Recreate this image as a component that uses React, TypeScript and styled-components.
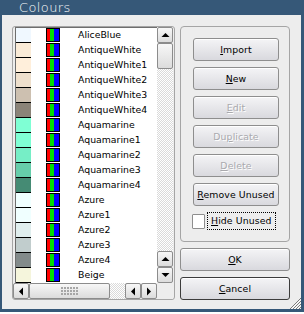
import styled, { createGlobalStyle } from "styled-components";

const GlobalStyle = createGlobalStyle`
  html, body {
    margin: 0;
    padding: 0;
    background: #ffffff;
  }
  body {
    font-family: "DejaVu Sans", "Liberation Sans", sans-serif;
  }
`;

const colours = [
  { name: "AliceBlue", hex: "#f0f8ff" },
  { name: "AntiqueWhite", hex: "#faebd7" },
  { name: "AntiqueWhite1", hex: "#ffefdb" },
  { name: "AntiqueWhite2", hex: "#eedfcc" },
  { name: "AntiqueWhite3", hex: "#cdc0b0" },
  { name: "AntiqueWhite4", hex: "#8b8378" },
  { name: "Aquamarine", hex: "#7fffd4" },
  { name: "Aquamarine1", hex: "#7fffd4" },
  { name: "Aquamarine2", hex: "#76eec6" },
  { name: "Aquamarine3", hex: "#66cdaa" },
  { name: "Aquamarine4", hex: "#458b74" },
  { name: "Azure", hex: "#f0ffff" },
  { name: "Azure1", hex: "#f0ffff" },
  { name: "Azure2", hex: "#e0eeee" },
  { name: "Azure3", hex: "#c1cdcd" },
  { name: "Azure4", hex: "#838b8b" },
  { name: "Beige", hex: "#f5f5dc" },
];

const Window = styled.div`
  width: 304px;
  height: 312px;
  box-sizing: border-box;
  background: #365878;
  padding: 0 3px 3px 2px;
  display: flex;
  flex-direction: column;
`;

const TitleBar = styled.div`
  height: 15px;
  padding-left: 17px;
  color: #ffffff;
  font-size: 13px;
  font-weight: 200;
  line-height: 15px;
  letter-spacing: 0.4px;
`;

const Body = styled.div`
  position: relative;
  flex: 1;
  background: #ededed;
  display: flex;
  gap: 5px;
  padding: 11px 11px 9px 10px;
`;

const Panel = styled.div`
  width: 163px;
  height: 274px;
  box-sizing: border-box;
  border: 1px solid #a5a5a5;
  border-radius: 3px;
  display: grid;
  grid-template-columns: 144px 16px;
  grid-template-rows: 256px 16px;
`;

const ListArea = styled.div`
  margin-left: 2px;
  border-left: 1px solid #6e6e6e;
  border-top: 1px solid #6e6e6e;
  background: #ffffff;
  overflow: hidden;
`;

const Row = styled.div`
  height: 15px;
  display: flex;
  align-items: flex-start;
`;

const Swatch = styled.div<{ $color: string }>`
  width: 15px;
  height: 14px;
  background: ${(p) => p.$color};
  border-bottom: 1px solid #000000;
`;

const RgbIcon = styled.div`
  margin-left: 15px;
  width: 12px;
  height: 12px;
  border: 1px solid #000000;
  background: linear-gradient(
    90deg,
    #ff0000 0 3px,
    #00e000 3px 7px,
    #0000ff 7px 12px
  );
`;

const Name = styled.span`
  margin-left: 18px;
  font-size: 9.33px;
  line-height: 14px;
  color: #000000;
  white-space: nowrap;
`;

const VBar = styled.div`
  display: flex;
  flex-direction: column;
`;

const HBar = styled.div`
  display: flex;
`;

const Track = styled.div`
  flex: 1;
  background-color: #ffffff;
  background-image: repeating-conic-gradient(#dadada 0% 25%, #ffffff 0% 50%);
  background-size: 2px 2px;
`;

const ScrollButton = styled.div<{ $len?: number; $horizontal?: boolean }>`
  box-sizing: border-box;
  width: ${(p) => (p.$horizontal ? `${p.$len ?? 16}px` : "16px")};
  height: ${(p) => (p.$horizontal ? "16px" : `${p.$len ?? 16}px`)};
  flex: none;
  border: 1px solid #8c8c8c;
  border-radius: 2px;
  background: linear-gradient(#f7f7f7, #dcdcdc);
  display: flex;
  align-items: center;
  justify-content: center;
`;

const Grip = styled.div`
  width: 18px;
  height: 9px;
  background-image: radial-gradient(circle at 1px 1px, #a6a6a6 0.8px, transparent 1px);
  background-size: 3px 3px;
`;

const Arrow = ({ dir }: { dir: "up" | "down" | "left" | "right" }) => {
  const pts = {
    up: "0.5,5 4.5,1 8.5,5",
    down: "0.5,1 4.5,5 8.5,1",
    left: "5,0.5 1,4.5 5,8.5",
    right: "1,0.5 5,4.5 1,8.5",
  }[dir];
  const horiz = dir === "left" || dir === "right";
  return (
    <svg
      width={horiz ? 6 : 9}
      height={horiz ? 9 : 6}
      viewBox={horiz ? "0 0 6 9" : "0 0 9 6"}
    >
      <polygon points={pts} fill="#000000" />
    </svg>
  );
};

const Corner = styled.div`
  background: #ededed;
`;

const Side = styled.div`
  width: 110px;
  display: flex;
  flex-direction: column;
  gap: 6px;
`;

const Group = styled.div`
  height: 216px;
  box-sizing: border-box;
  border: 1px solid #a5a5a5;
  border-radius: 4px;
  padding: 11px 10px 0 12px;
  display: flex;
  flex-direction: column;
  gap: 6px;
`;

const Button = styled.div<{ $disabled?: boolean; $default?: boolean }>`
  height: 23px;
  box-sizing: border-box;
  border: 1px solid ${(p) => (p.$default ? "#3c3c3c" : "#8e8e8e")};
  border-radius: 3px;
  background: linear-gradient(#f4f4f6, #d9d9de);
  box-shadow: inset 0 1px 0 #ffffff;
  display: flex;
  align-items: center;
  justify-content: center;
  font-size: 9.33px;
  color: ${(p) => (p.$disabled ? "#a9a9ad" : "#000000")};
  text-shadow: ${(p) => (p.$disabled ? "1px 1px 0 #ffffff" : "none")};
  letter-spacing: 0.1px;
  u {
    text-decoration-thickness: 1px;
    text-underline-offset: 1px;
  }
`;

const CheckRow = styled.div`
  display: flex;
  align-items: center;
  margin-left: -1px;
  height: 18px;
`;

const CheckBox = styled.div`
  width: 11px;
  height: 13px;
  border: 1px solid #8e8e8e;
  background: #ffffff;
  border-radius: 1px;
`;

const CheckLabel = styled.span`
  margin-left: 2px;
  padding: 2px 3px 3px 3px;
  border: 1px dotted #000000;
  font-size: 9.33px;
  letter-spacing: 0.1px;
  color: #000000;
`;

const ResizeGrip = styled.svg`
  position: absolute;
  right: 0;
  bottom: 0;
`;

function Label({ text, at }: { text: string; at: number }) {
  return (
    <span>
      {text.slice(0, at)}
      <u>{text[at]}</u>
      {text.slice(at + 1)}
    </span>
  );
}

export default function App() {
  return (
    <>
      <GlobalStyle />
      <Window>
        <TitleBar>Colours</TitleBar>
        <Body>
          <Panel>
            <ListArea>
              {colours.map((c) => (
                <Row key={c.name}>
                  <Swatch $color={c.hex} />
                  <RgbIcon />
                  <Name>{c.name}</Name>
                </Row>
              ))}
            </ListArea>
            <VBar>
              <ScrollButton>
                <Arrow dir="up" />
              </ScrollButton>
              <ScrollButton $len={26} />
              <Track />
              <ScrollButton>
                <Arrow dir="up" />
              </ScrollButton>
              <ScrollButton>
                <Arrow dir="down" />
              </ScrollButton>
            </VBar>
            <HBar>
              <ScrollButton $horizontal>
                <Arrow dir="left" />
              </ScrollButton>
              <ScrollButton $horizontal $len={81}>
                <Grip />
              </ScrollButton>
              <Track />
              <ScrollButton $horizontal>
                <Arrow dir="left" />
              </ScrollButton>
              <ScrollButton $horizontal>
                <Arrow dir="right" />
              </ScrollButton>
            </HBar>
            <Corner />
          </Panel>
          <Side>
            <Group>
              <Button>
                <Label text="Import" at={0} />
              </Button>
              <Button>
                <Label text="New" at={0} />
              </Button>
              <Button $disabled>
                <Label text="Edit" at={0} />
              </Button>
              <Button $disabled>
                <Label text="Duplicate" at={2} />
              </Button>
              <Button $disabled>
                <Label text="Delete" at={0} />
              </Button>
              <Button>
                <Label text="Remove Unused" at={0} />
              </Button>
              <CheckRow>
                <CheckBox />
                <CheckLabel>
                  <Label text="Hide Unused" at={0} />
                </CheckLabel>
              </CheckRow>
            </Group>
            <Button>
              <Label text="OK" at={0} />
            </Button>
            <Button $default>
              <Label text="Cancel" at={0} />
            </Button>
          </Side>
          <ResizeGrip width="12" height="12" viewBox="0 0 12 12">
            <g stroke="#7a7a7a" strokeWidth="1">
              <line x1="12" y1="1" x2="1" y2="12" />
              <line x1="12" y1="4" x2="4" y2="12" />
              <line x1="12" y1="7" x2="7" y2="12" />
              <line x1="12" y1="10" x2="10" y2="12" />
            </g>
            <g stroke="#ffffff" strokeWidth="1">
              <line x1="12" y1="2.5" x2="2.5" y2="12" />
              <line x1="12" y1="5.5" x2="5.5" y2="12" />
              <line x1="12" y1="8.5" x2="8.5" y2="12" />
            </g>
          </ResizeGrip>
        </Body>
      </Window>
    </>
  );
}
